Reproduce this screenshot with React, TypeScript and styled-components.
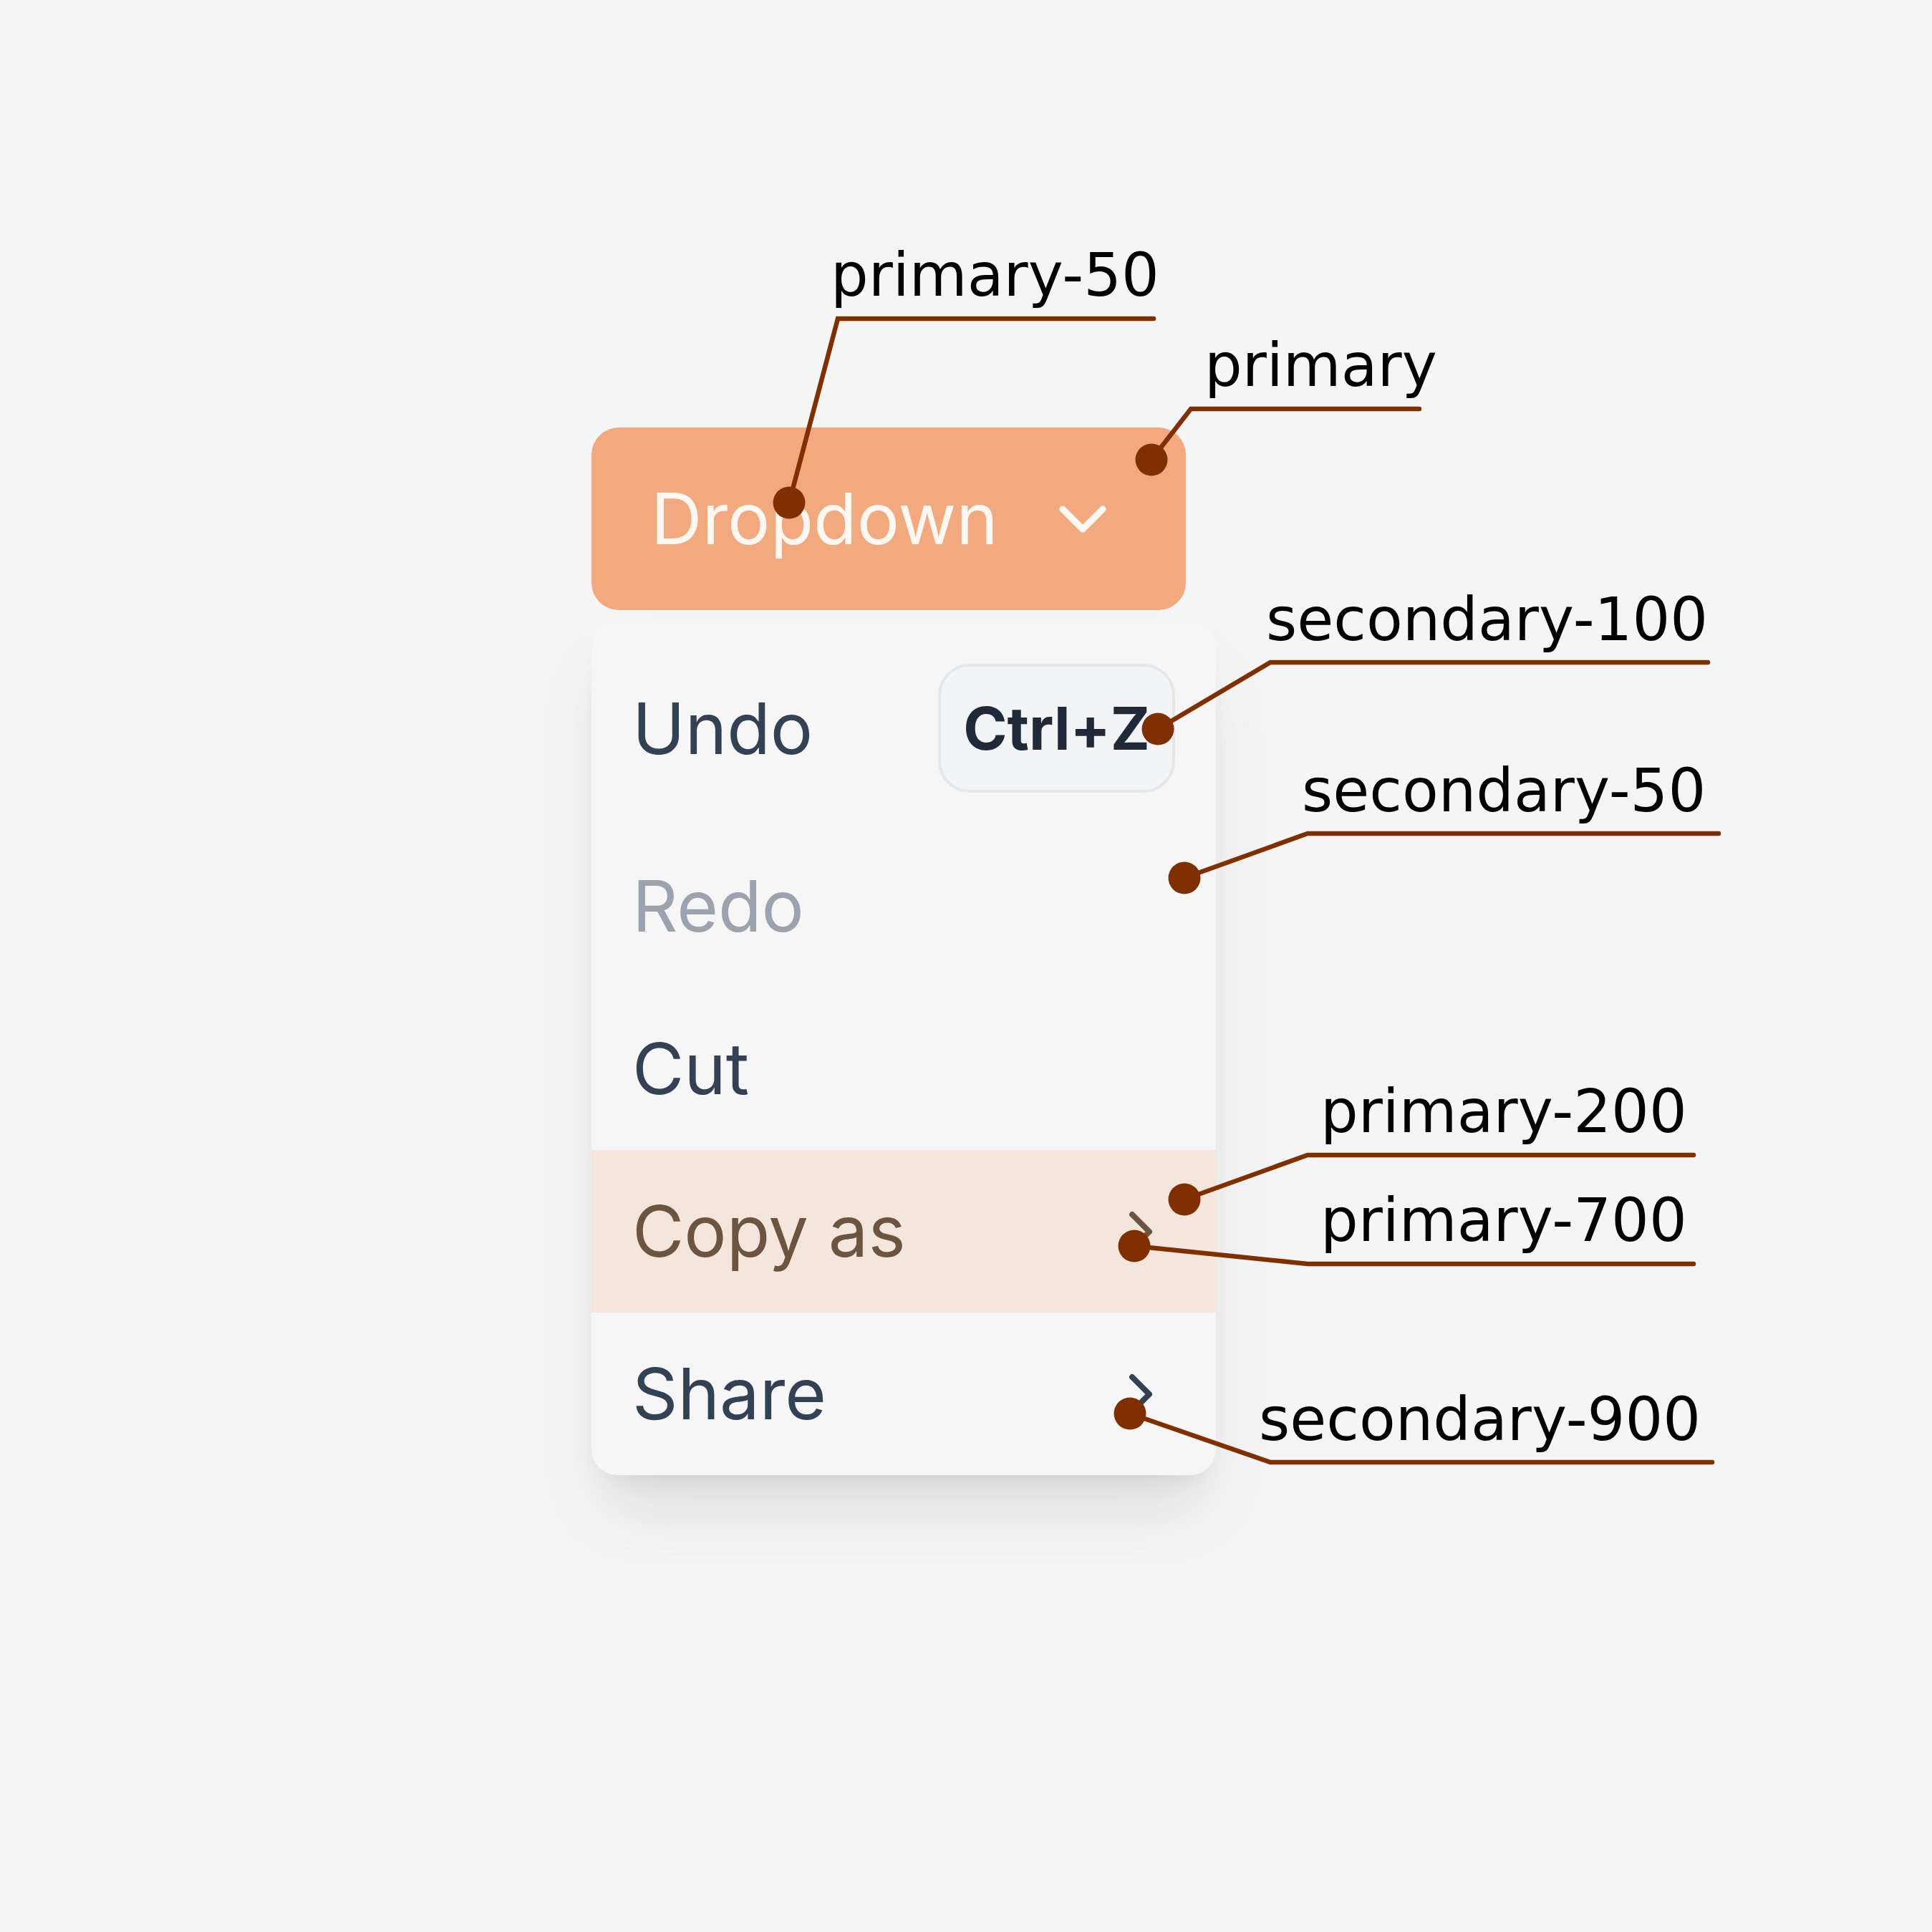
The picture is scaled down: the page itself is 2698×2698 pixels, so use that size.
import React from "react";
import styled, { createGlobalStyle } from "styled-components";

const GlobalStyle = createGlobalStyle`
  html, body {
    margin: 0;
    padding: 0;
    background: #f5f5f5;
  }
  #root {
    width: 2698px;
    height: 2698px;
  }
`;

type Tone = "default" | "muted" | "active";

interface Callout {
  label: string;
  x: number;
  baseline: number;
  dot: [number, number];
  bend: [number, number];
  end: number;
}

const callouts: Callout[] = [
  { label: "primary-50", x: 1160, baseline: 413, dot: [1102, 702], bend: [1170, 445], end: 1611 },
  { label: "primary", x: 1682, baseline: 539, dot: [1608, 642], bend: [1663, 571], end: 1982 },
  { label: "secondary-100", x: 1768, baseline: 894, dot: [1617, 1018], bend: [1774, 925], end: 2385 },
  { label: "secondary-50", x: 1818, baseline: 1133, dot: [1654, 1226], bend: [1826, 1164], end: 2400 },
  { label: "primary-200", x: 1844, baseline: 1581, dot: [1654, 1675], bend: [1826, 1613], end: 2365 },
  { label: "primary-700", x: 1844, baseline: 1733, dot: [1584, 1740], bend: [1826, 1765], end: 2365 },
  { label: "secondary-900", x: 1758, baseline: 2011, dot: [1578, 1974], bend: [1774, 2042], end: 2391 },
];

const ChevronDown = () => (
  <svg width="112" height="112" viewBox="0 0 24 24" fill="none" stroke="currentColor" strokeWidth="2" strokeLinecap="round" strokeLinejoin="round">
    <path d="m6 9 6 6 6-6" />
  </svg>
);

const ChevronRight = () => (
  <svg width="96" height="96" viewBox="0 0 24 24" fill="none" stroke="currentColor" strokeWidth="2" strokeLinecap="round" strokeLinejoin="round">
    <path d="m9 18 6-6-6-6" />
  </svg>
);

const App = () => {
  return (
    <>
      <GlobalStyle />
      <Stage>
        <Dropdown>
          <Trigger type="button">
            <span>Dropdown</span>
            <ChevronDown />
          </Trigger>
          <Menu role="menu">
            <Item $tone="default">
              <span>Undo</span>
              <Kbd>Ctrl+Z</Kbd>
            </Item>
            <Item $tone="muted">
              <span>Redo</span>
            </Item>
            <Item $tone="default">
              <span>Cut</span>
            </Item>
            <Item $tone="active">
              <span>Copy as</span>
              <ChevronRight />
            </Item>
            <Item $tone="default">
              <span>Share</span>
              <ChevronRight />
            </Item>
          </Menu>
        </Dropdown>

        <Leaders width="2698" height="2698" viewBox="0 0 2698 2698">
          {callouts.map((c) => (
            <g key={c.label}>
              <polyline
                points={`${c.dot[0]},${c.dot[1]} ${c.bend[0]},${c.bend[1]} ${c.end},${c.bend[1]}`}
                fill="none"
                stroke="#803000"
                strokeWidth="6.5"
                strokeLinecap="round"
                strokeLinejoin="miter"
              />
              <circle cx={c.dot[0]} cy={c.dot[1]} r="22.5" fill="#803000" />
            </g>
          ))}
        </Leaders>
        {callouts.map((c) => (
          <Label key={c.label} $x={c.x} $top={c.baseline - 70}>
            {c.label}
          </Label>
        ))}
      </Stage>
    </>
  );
};

const Stage = styled.div`
  position: relative;
  width: 2698px;
  height: 2698px;
  box-sizing: border-box;
  padding: 597px 0 0 826px;
  background: #f5f5f5;
  font-family: Inter, "Noto Sans", sans-serif;
`;

const Dropdown = styled.div`
  display: flex;
  flex-direction: column;
  align-items: flex-start;
  gap: 14px;
  width: 872px;
`;

const Trigger = styled.button`
  display: flex;
  align-items: center;
  justify-content: space-between;
  box-sizing: border-box;
  width: 830px;
  height: 255px;
  padding: 0 88px 0 83px;
  border: none;
  border-radius: 38px;
  background: #f2a97e;
  color: #fff8f2;
  font-family: Inter, "Noto Sans", sans-serif;
  font-size: 99px;
  font-weight: 400;
  line-height: 1;
  cursor: pointer;
`;

const Menu = styled.div`
  box-sizing: border-box;
  width: 872px;
  padding-top: 16px;
  border-radius: 36px;
  background: #f6f6f6;
  overflow: hidden;
  box-shadow: 0 60px 100px -16px rgba(0, 0, 0, 0.1),
    0 24px 36px -24px rgba(0, 0, 0, 0.1);
`;

const toneColor: Record<Tone, string> = {
  default: "#334155",
  muted: "#9ca3af",
  active: "#6b5541",
};

const Item = styled.div<{ $tone: Tone }>`
  display: flex;
  align-items: center;
  justify-content: space-between;
  box-sizing: border-box;
  min-height: 227px;
  padding: 45px 57px;
  background: ${(p) => (p.$tone === "active" ? "#f5e6dd" : "transparent")};
  color: ${(p) => toneColor[p.$tone]};
  font-size: 99px;
  line-height: 137px;
  cursor: default;
`;

const Kbd = styled.kbd`
  display: inline-flex;
  align-items: center;
  box-sizing: border-box;
  height: 180px;
  padding: 0 31px;
  border: 4px solid #e5e7eb;
  border-radius: 44px;
  background: #f3f4f6;
  color: #1f2937;
  font-family: Inter, "Noto Sans", sans-serif;
  font-size: 83px;
  font-weight: 700;
  line-height: 1;
`;

const Leaders = styled.svg`
  position: absolute;
  left: 0;
  top: 0;
  pointer-events: none;
`;

const Label = styled.span<{ $x: number; $top: number }>`
  position: absolute;
  left: ${(p) => p.$x}px;
  top: ${(p) => p.$top}px;
  font-family: "DejaVu Sans", "Noto Sans", sans-serif;
  font-size: 83px;
  line-height: 1;
  color: #000;
  white-space: nowrap;
`;

export default App;
